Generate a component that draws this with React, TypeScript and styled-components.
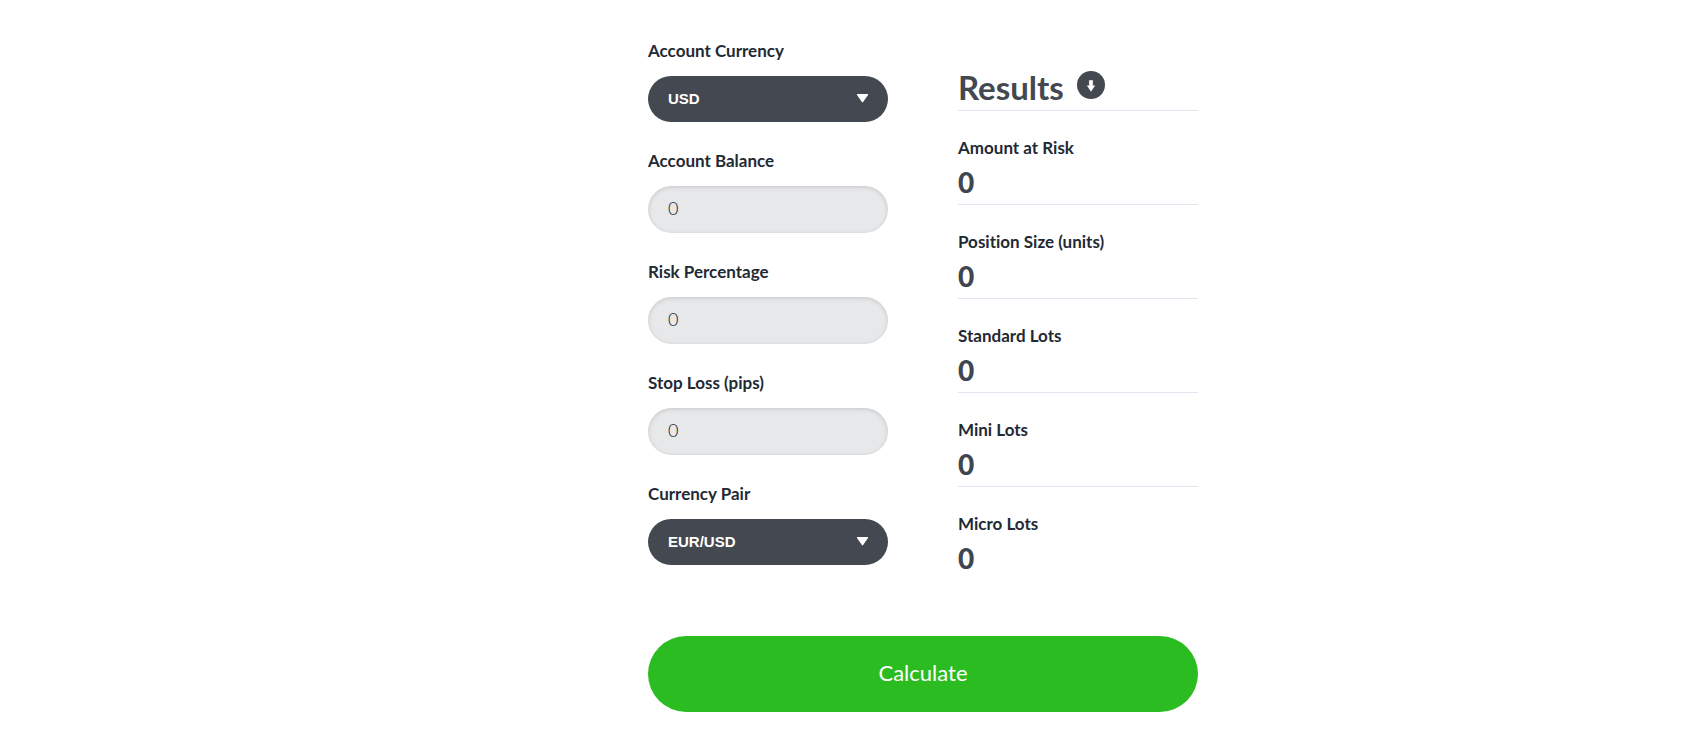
import React, { FormEvent, useState } from "react";
import styled, { createGlobalStyle } from "styled-components";

const GlobalStyle = createGlobalStyle`
  *, *::before, *::after { box-sizing: border-box; }
  body {
    margin: 0;
    background: #fff;
    color: #1f2a35;
    font-family: Lato, "Open Sans", sans-serif;
    font-variant-ligatures: none;
  }
`;

const Calculator = styled.form`
  display: grid;
  grid-template-columns: minmax(0, 240px) minmax(0, 240px);
  column-gap: 70px;
  row-gap: 55px;
  justify-content: center;
  padding: 39px 0 22px 142px;

  @media (max-width: 800px) {
    padding-left: 24px;
    padding-right: 24px;
  }
`;

const Fields = styled.div`
  display: flex;
  flex-direction: column;
  gap: 27px;
`;

const Field = styled.div`
  display: flex;
  flex-direction: column;
  gap: 13px;
`;

const Label = styled.label`
  font-size: 17px;
  font-weight: 700;
  line-height: 24px;
`;

const SelectWrap = styled.div`
  position: relative;
`;

const Select = styled.select`
  appearance: none;
  display: block;
  width: 100%;
  height: 46px;
  padding: 0 44px 2px 20px;
  border: 0;
  border-radius: 23px;
  background: #444851;
  color: #fff;
  font: 700 15px "Liberation Sans", Arial, sans-serif;
`;

const Caret = styled.svg`
  position: absolute;
  top: 18px;
  right: 19px;
  pointer-events: none;
`;

const Input = styled.input`
  display: block;
  width: 100%;
  height: 47px;
  padding: 0 20px 4px;
  border: 0;
  border-radius: 24px;
  background: #e7e8ea;
  box-shadow: inset 0 1px 4px rgba(0, 0, 0, 0.15);
  color: #14181f;
  font: 300 18px Lato, "Open Sans", sans-serif;
`;

const Results = styled.section`
  display: flex;
  flex-direction: column;
`;

const ResultsHead = styled.header`
  display: flex;
  align-items: center;
  gap: 13px;
  height: 72px;
  padding-top: 20px;
  border-bottom: 1px solid #e4e4f0;
`;

const Title = styled.h2`
  margin: 0;
  color: #444851;
  font-size: 33px;
  font-weight: 700;
  line-height: 40px;
  padding-top: 5px;
`;

const ResultList = styled.dl`
  margin: 0;
`;

const Result = styled.div`
  height: 94px;
  padding-top: 25px;
  border-bottom: 1px solid #e4e4f0;

  &:last-child { border-bottom: 0; }
`;

const Term = styled.dt`
  font-size: 17px;
  font-weight: 700;
  line-height: 24px;
`;

const Value = styled.dd`
  margin: 0;
  padding-top: 5px;
  color: #3f464f;
  font-size: 28px;
  font-weight: 900;
  line-height: 34px;
`;

const Submit = styled.button`
  grid-column: 1 / -1;
  height: 76px;
  padding: 0 24px 4px;
  border: 0;
  border-radius: 38px;
  background: #2bbc22;
  color: #fff;
  font: 400 22px Lato, "Open Sans", sans-serif;
  cursor: pointer;
`;

function DropDown({ id, label, options }: { id: string; label: string; options: string[] }) {
  return (
    <Field>
      <Label htmlFor={id}>{label}</Label>
      <SelectWrap>
        <Select id={id} name={id}>
          {options.map((o) => (
            <option key={o}>{o}</option>
          ))}
        </Select>
        <Caret width="13" height="9" viewBox="0 0 13 9" aria-hidden="true">
          <path d="M1.4 0h10.2q1 0 .4.9L7.1 8.1q-.6.8-1.2 0L1 .9Q.4 0 1.4 0z" fill="#fff" />
        </Caret>
      </SelectWrap>
    </Field>
  );
}

function NumberField({ id, label }: { id: string; label: string }) {
  return (
    <Field>
      <Label htmlFor={id}>{label}</Label>
      <Input id={id} name={id} type="text" inputMode="decimal" defaultValue="0" />
    </Field>
  );
}

const NAMES = ["Amount at Risk", "Position Size (units)", "Standard Lots", "Mini Lots", "Micro Lots"];

export default function App() {
  const [values, setValues] = useState<number[]>([0, 0, 0, 0, 0]);

  const calculate = (e: FormEvent<HTMLFormElement>) => {
    e.preventDefault();
    const data = new FormData(e.currentTarget);
    const risk = (Number(data.get("balance")) * Number(data.get("risk"))) / 100 || 0;
    const pips = Number(data.get("stop")) || 0;
    const units = pips ? Math.round(risk / (pips * 0.0001)) : 0;
    setValues([risk, units, units / 100000, units / 10000, units / 1000]);
  };

  return (
    <>
      <GlobalStyle />
      <Calculator onSubmit={calculate}>
        <Fields>
          <DropDown id="currency" label="Account Currency" options={["USD", "EUR", "GBP", "JPY"]} />
          <NumberField id="balance" label="Account Balance" />
          <NumberField id="risk" label="Risk Percentage" />
          <NumberField id="stop" label="Stop Loss (pips)" />
          <DropDown id="pair" label="Currency Pair" options={["EUR/USD", "GBP/USD", "AUD/USD"]} />
        </Fields>
        <Results>
          <ResultsHead>
            <Title>Results</Title>
            <svg width="28" height="28" viewBox="0 0 28 28" aria-hidden="true">
              <circle cx="14" cy="14" r="14" fill="#444851" />
              <path d="M12.4 9.5h3.2v5.3h2L14 20.3l-3.6-5.5h2z" fill="#fff" stroke="#fff" strokeWidth=".6" strokeLinejoin="round" />
            </svg>
          </ResultsHead>
          <ResultList>
            {NAMES.map((name, i) => (
              <Result key={name}>
                <Term>{name}</Term>
                <Value>{values[i]}</Value>
              </Result>
            ))}
          </ResultList>
        </Results>
        <Submit type="submit">Calculate</Submit>
      </Calculator>
    </>
  );
}
